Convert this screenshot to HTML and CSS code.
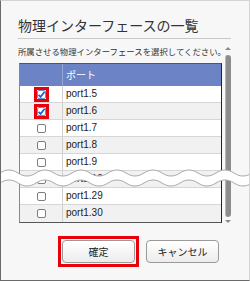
FILE: index.html
```html
<!DOCTYPE html>
<html lang="ja">
<head>
    <meta charset="UTF-8">
    <title>物理インターフェースの一覧</title>
    <link rel="stylesheet" href="styles.css">
</head>
<body>
    <div class="dialog">
        <h1 class="dialog-title">物理インターフェースの一覧</h1>

        <div class="scroll-area">
            <div class="scroll-content">
                <p class="hint">所属させる物理インターフェースを選択してください。</p>

                <div class="port-list">
                    <div class="row head">
                        <div class="cell-check"></div>
                        <div class="cell-name">ポート</div>
                    </div>
                    <div class="row">
                        <div class="cell-check">
                            <span class="mark">
                                <span class="checkbox checked">
                                    <svg viewBox="0 0 9 9" width="9" height="9"><path d="M1.5 4.8 L3.6 6.8 L7.6 1.8" fill="none" stroke="#1f63d6" stroke-width="1.8"/></svg>
                                </span>
                            </span>
                        </div>
                        <div class="cell-name">port1.5</div>
                    </div>
                    <div class="row odd">
                        <div class="cell-check">
                            <span class="mark">
                                <span class="checkbox checked">
                                    <svg viewBox="0 0 9 9" width="9" height="9"><path d="M1.5 4.8 L3.6 6.8 L7.6 1.8" fill="none" stroke="#1f63d6" stroke-width="1.8"/></svg>
                                </span>
                            </span>
                        </div>
                        <div class="cell-name">port1.6</div>
                    </div>
                    <div class="row">
                        <div class="cell-check"><span class="checkbox"></span></div>
                        <div class="cell-name">port1.7</div>
                    </div>
                    <div class="row odd">
                        <div class="cell-check"><span class="checkbox"></span></div>
                        <div class="cell-name">port1.8</div>
                    </div>
                    <div class="row">
                        <div class="cell-check"><span class="checkbox"></span></div>
                        <div class="cell-name">port1.9</div>
                    </div>
                    <div class="row odd">
                        <div class="cell-check"><span class="checkbox"></span></div>
                        <div class="cell-name">port1.10</div>
                    </div>
                    <div class="row">
                        <div class="cell-check"><span class="checkbox"></span></div>
                        <div class="cell-name">port1.29</div>
                    </div>
                    <div class="row odd">
                        <div class="cell-check"><span class="checkbox"></span></div>
                        <div class="cell-name">port1.30</div>
                    </div>
                </div>
            </div>

            <div class="scrollbar">
                <span class="arrow up"></span>
                <span class="thumb"></span>
                <span class="arrow down"></span>
            </div>
        </div>

        <div class="actions">
            <span class="mark btn-mark">
                <button class="btn" type="button">確定</button>
            </span>
            <button class="btn" type="button">キャンセル</button>
        </div>

        <!-- 省略を示す波線 -->
        <svg class="wave" viewBox="0 0 250 22" width="250" height="22">
            <path d="M0 5 C6 1 12 1 18 5 S30 9 36 5 S48 1 54 5 S66 9 72 5 S84 1 90 5 S102 9 108 5 S120 1 126 5 S138 9 144 5 S156 1 162 5 S174 9 180 5 S192 1 198 5 S210 9 216 5 S228 1 234 5 S246 9 252 5
                     L252 15 C246 19 240 19 234 15 S222 11 216 15 S204 19 198 15 S186 11 180 15 S168 19 162 15 S150 11 144 15 S132 19 126 15 S114 11 108 15 S96 19 90 15 S78 11 72 15 S60 19 54 15 S42 11 36 15 S24 19 18 15 S6 11 0 15 Z"
                  fill="#fff"/>
            <path d="M0 5 C6 1 12 1 18 5 S30 9 36 5 S48 1 54 5 S66 9 72 5 S84 1 90 5 S102 9 108 5 S120 1 126 5 S138 9 144 5 S156 1 162 5 S174 9 180 5 S192 1 198 5 S210 9 216 5 S228 1 234 5 S246 9 252 5"
                  fill="none" stroke="#a8a8a8" stroke-width="1"/>
            <path d="M0 15 C6 11 12 11 18 15 S30 19 36 15 S48 11 54 15 S66 19 72 15 S84 11 90 15 S102 19 108 15 S120 11 126 15 S138 19 144 15 S156 11 162 15 S174 19 180 15 S192 11 198 15 S210 19 216 15 S228 11 234 15 S246 19 252 15"
                  fill="none" stroke="#a8a8a8" stroke-width="1"/>
        </svg>
    </div>
</body>
</html>
```

FILE: styles.css
```css
body {
  margin: 0;
  font-family: "Noto Sans CJK JP", "Liberation Sans", sans-serif;
  color: #222;
}

.dialog {
  position: relative;
  width: 250px;
  height: 281px;
  box-sizing: border-box;
  padding: 0 18px 0 17px;
  background: #f7f7f7;
  border: 1px solid #d4d4d4;
  border-left-color: #6a6a6a;
  border-bottom-color: #6a6a6a;
  overflow: hidden;
}

.dialog-title {
  margin: 0;
  padding: 14px 0 3px;
  font-size: 14px;
  font-weight: normal;
  line-height: 20px;
  color: #333;
  border-bottom: 1px solid #c8c8c8;
}

.scroll-area {
  display: flex;
  margin-top: 6px;
}

.scroll-content {
  width: 205px;
}

.hint {
  margin: 0;
  font-size: 8.4px;
  line-height: 12px;
  white-space: nowrap;
  color: #333;
}

/* ポート一覧 */
.port-list {
  margin: 6px 0 0 1px;
  width: 203px;
  box-sizing: border-box;
  border: 1px solid #555;
  border-left-color: #888;
  border-right-color: #222;
  background: #fff;
}

.row {
  display: flex;
  height: 17px;
  box-sizing: border-box;
  border-bottom: 1px solid #d6d6d6;
  font-family: "Liberation Sans", sans-serif;
  font-size: 10px;
  line-height: 16px;
}

.row:last-child {
  border-bottom: none;
}

.row.odd {
  background: #f1f1f1;
}

.row.head {
  height: 22px;
  line-height: 22px;
  background: #6c84c6;
  color: #fff;
  border-bottom: none;
  font-family: "Noto Sans CJK JP", sans-serif;
}

.cell-check {
  width: 42px;
  flex: none;
  display: flex;
  align-items: center;
  justify-content: center;
  border-right: 1px solid #d0d0d0;
}

.head .cell-check {
  border-right-color: #95a7d8;
}

.cell-name {
  padding-left: 3px;
}

.checkbox {
  display: block;
  width: 9px;
  height: 9px;
  box-sizing: border-box;
  border: 1px solid #7d7d7d;
  border-radius: 2px;
  background: #fff;
}

.checkbox.checked {
  border-color: #6d8fc9;
  position: relative;
}

.checkbox svg {
  position: absolute;
  left: -1px;
  top: -1px;
}

/* 赤枠の強調 */
.mark {
  display: block;
  border: 3px solid #e8000b;
}

.btn-mark {
  padding: 1px;
  line-height: 0;
}

/* スクロールバー */
.scrollbar {
  width: 7px;
  margin-left: 2px;
  display: flex;
  flex-direction: column;
  align-items: center;
  padding-top: 2px;
}

.arrow {
  width: 0;
  height: 0;
  border-left: 3px solid transparent;
  border-right: 3px solid transparent;
}

.arrow.up {
  border-bottom: 3px solid #8a8a8a;
}

.arrow.down {
  border-top: 3px solid #8a8a8a;
}

.thumb {
  width: 6px;
  flex: 1;
  margin: 5px 0 3px;
  border-radius: 3px;
  background: #8c8c8c;
  border-left: 1px solid #b8b8b8;
  box-sizing: border-box;
}

/* ボタン */
.actions {
  display: flex;
  justify-content: flex-end;
  align-items: center;
  gap: 7px;
  margin-top: 13px;
  padding-right: 12px;
}

.btn {
  width: 73px;
  height: 23px;
  padding: 0;
  border: 1px solid #9a9a9a;
  border-radius: 4px;
  background: linear-gradient(#ffffff, #ececec);
  font-family: "Noto Sans CJK JP", sans-serif;
  font-size: 10px;
  color: #222;
}

.wave {
  position: absolute;
  left: -1px;
  top: 167px;
}
```
